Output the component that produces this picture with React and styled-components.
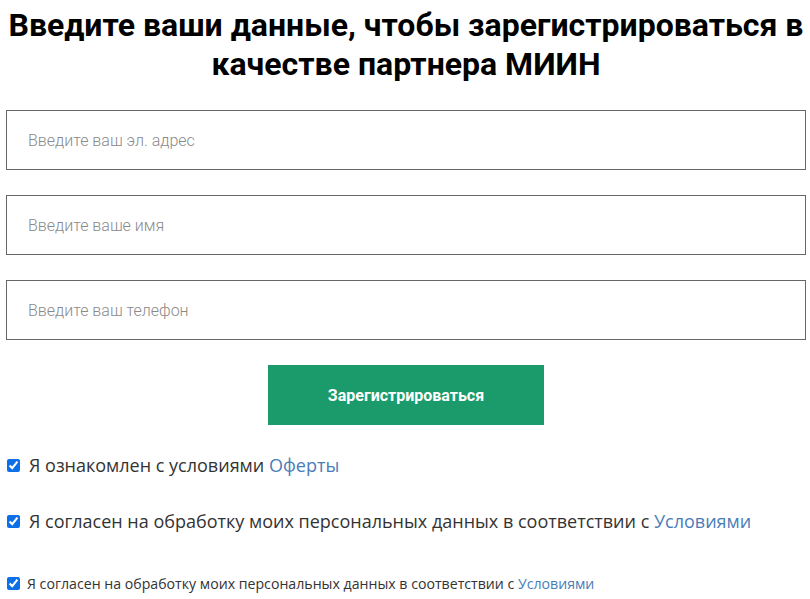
import React from "react";
import styled, { createGlobalStyle } from "styled-components";

const GlobalStyle = createGlobalStyle`
  body {
    margin: 0;
    background: #fff;
    font-family: Roboto, "Liberation Sans", sans-serif;
  }
`;

const Wrapper = styled.div`
  width: 800px;
  padding: 0 4px 0 6px;
`;

const Title = styled.h1`
  margin: 0;
  padding-top: 6px;
  font-family: Roboto, sans-serif;
  font-weight: 700;
  font-size: 32px;
  line-height: 39px;
  text-align: center;
  color: #000;
`;

const Form = styled.form`
  display: flex;
  flex-direction: column;
  gap: 25px;
  margin-top: 26px;
`;

const Input = styled.input`
  box-sizing: border-box;
  width: 100%;
  height: 60px;
  border: 1px solid #666;
  padding: 0 21px;
  font-family: Roboto, sans-serif;
  font-weight: 300;
  font-size: 16px;
  color: #333;
  outline: none;

  &::placeholder {
    color: #8a8a8a;
  }
`;

const Button = styled.button`
  align-self: center;
  width: 276px;
  height: 60px;
  border: none;
  background: #1b9b6b;
  color: #fff;
  font-family: Roboto, sans-serif;
  font-weight: 700;
  font-size: 16px;
  cursor: pointer;
`;

const Agreements = styled.div`
  display: flex;
  flex-direction: column;
  margin-top: 29px;
`;

const Row = styled.label`
  display: flex;
  align-items: center;
  gap: ${(p) => (p.$small ? "7px" : "9px")};
  height: ${(p) => p.$height}px;
  font-family: "Open Sans", sans-serif;
  font-size: ${(p) => (p.$small ? "14.15px" : "18px")};
  color: #333;
`;

const Check = styled.input`
  margin: 0 0 0 1px;
  width: 13px;
  height: 13px;
  accent-color: #0b6fe8;
`;

const Link = styled.a`
  color: #4a7db8;
  text-decoration: none;
`;

export default function App() {
  return (
    <Wrapper>
      <GlobalStyle />
      <Title>
        Введите ваши данные, чтобы зарегистрироваться в качестве партнера МИИН
      </Title>
      <Form onSubmit={(e) => e.preventDefault()}>
        <Input type="email" placeholder="Введите ваш эл. адрес" />
        <Input type="text" placeholder="Введите ваше имя" />
        <Input type="tel" placeholder="Введите ваш телефон" />
        <Button type="submit">Зарегистрироваться</Button>
      </Form>
      <Agreements>
        <Row $height={22}>
          <Check type="checkbox" defaultChecked />
          <span>
            Я ознакомлен с условиями <Link href="#">Оферты</Link>
          </span>
        </Row>
        <Row $height={90}>
          <Check type="checkbox" defaultChecked />
          <span>
            Я согласен на обработку моих персональных данных в соответствии с{" "}
            <Link href="#">Условиями</Link>
          </span>
        </Row>
        <Row $small $height={34}>
          <Check type="checkbox" defaultChecked />
          <span>
            Я согласен на обработку моих персональных данных в соответствии с{" "}
            <Link href="#">Условиями</Link>
          </span>
        </Row>
      </Agreements>
    </Wrapper>
  );
}
